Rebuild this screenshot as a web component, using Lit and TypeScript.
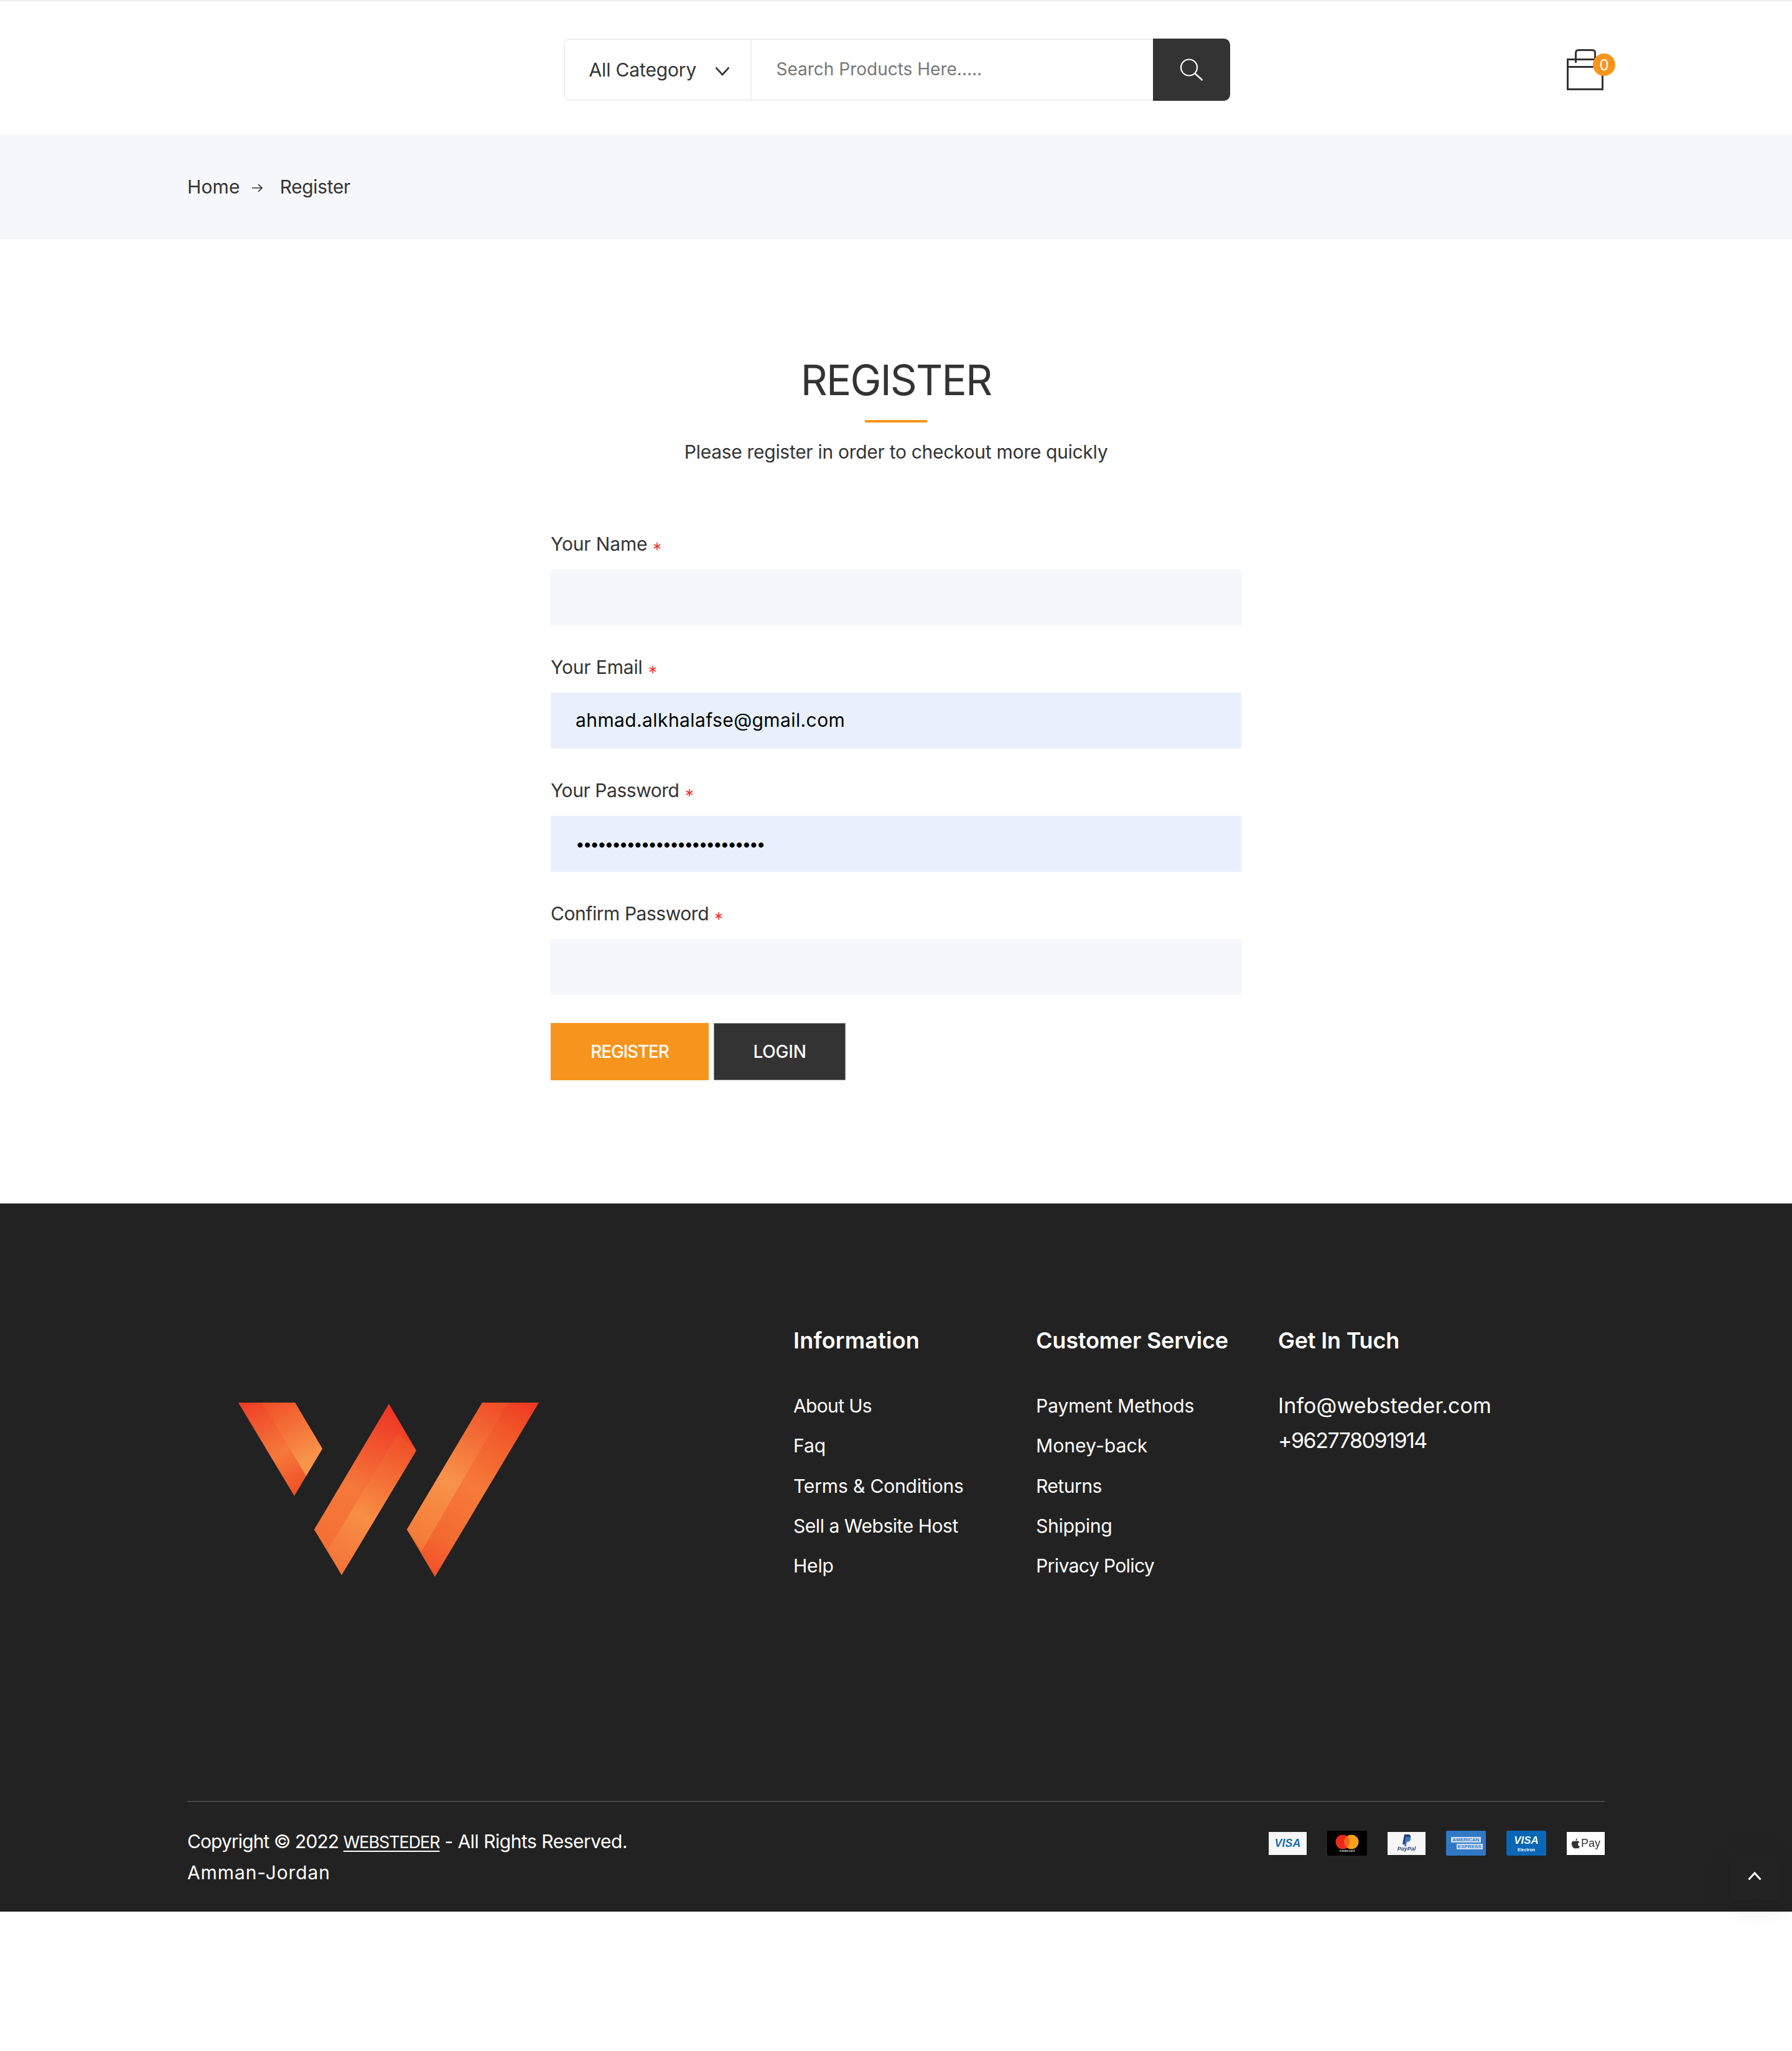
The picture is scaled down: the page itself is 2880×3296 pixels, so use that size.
import { LitElement, html, css, svg } from "lit";
import { customElement } from "lit/decorators.js";

const star = html`<svg class="star" viewBox="0 0 12 12" aria-hidden="true"><path d="M6 0V12M.8 3 11.2 9M11.2 3 .8 9" fill="none" stroke="#f5322a" stroke-width="1.700"/></svg>`;

const logo = svg`<defs>
  <linearGradient id="a1" gradientUnits="userSpaceOnUse" x1="383" y1="2254" x2="473" y2="2404"><stop offset="0" stop-color="#ee3b24"/><stop offset=".6" stop-color="#f5793a"/><stop offset="1" stop-color="#f04e27"/></linearGradient>
  <linearGradient id="a2" gradientUnits="userSpaceOnUse" x1="440" y1="2254" x2="492" y2="2345"><stop offset="0" stop-color="#f15329"/><stop offset="1" stop-color="#f8934a"/></linearGradient>
  <linearGradient id="b1" gradientUnits="userSpaceOnUse" x1="635" y1="2256" x2="520" y2="2480"><stop offset="0" stop-color="#ee3124"/><stop offset=".6" stop-color="#f5783a"/><stop offset="1" stop-color="#f47034"/></linearGradient>
  <linearGradient id="b2" gradientUnits="userSpaceOnUse" x1="650" y1="2310" x2="535" y2="2520"><stop offset="0" stop-color="#f04e27"/><stop offset=".6" stop-color="#f88e45"/><stop offset="1" stop-color="#f4733a"/></linearGradient>
  <linearGradient id="c1" gradientUnits="userSpaceOnUse" x1="790" y1="2254" x2="665" y2="2480"><stop offset="0" stop-color="#f14f28"/><stop offset=".55" stop-color="#f8934a"/><stop offset="1" stop-color="#f47a37"/></linearGradient>
  <linearGradient id="c2" gradientUnits="userSpaceOnUse" x1="850" y1="2254" x2="690" y2="2534"><stop offset="0" stop-color="#ee3a24"/><stop offset=".18" stop-color="#f15829"/><stop offset=".5" stop-color="#f67a3a"/><stop offset=".8" stop-color="#f26a30"/><stop offset="1" stop-color="#f14e28"/></linearGradient>
</defs>
<polygon points="383,2254 474,2254 518,2328 473,2404" fill="url(#a1)"/>
<polygon points="421,2254 474,2254 518,2328 492,2372" fill="url(#a2)"/>
<polygon points="625,2256 669,2331 549,2531 505,2458" fill="url(#b1)"/>
<polygon points="640,2304 669,2331 549,2531 527,2490" fill="url(#b2)"/>
<polygon points="775,2254 866,2254 699,2534 654,2458" fill="url(#c2)"/>
<polygon points="775,2254 816,2254 677.5,2493 654,2458" fill="url(#c1)"/>`;

const infoLinks = [
  { t: "About Us", s: -0.65 },
  { t: "Faq", s: 0 },
  { t: "Terms & Conditions", s: -0.15 },
  { t: "Sell a Website Host", s: -0.45 },
  { t: "Help", s: -0.2 },
];
const serviceLinks = [
  { t: "Payment Methods", s: -0.15 },
  { t: "Money-back", s: 0.1 },
  { t: "Returns", s: -0.5 },
  { t: "Shipping", s: -0.25 },
  { t: "Privacy Policy", s: -0.6 },
];
const links = (items: { t: string; s: number }[]) =>
  html`<ul>${items.map((l) => html`<li><a href="#" style="letter-spacing:${l.s}px">${l.t}</a></li>`)}</ul>`;

@customElement("app-root")
export class AppRoot extends LitElement {
  static styles = css`
    :host { display: block; font-family: Inter, "Liberation Sans", sans-serif; font-size: 30px; line-height: 40px; color: #333; background: #fff; }
    * { box-sizing: border-box; }
    a { color: inherit; text-decoration: none; }

    .header { display: grid; grid-template-columns: 1fr 1071px 1fr; align-items: center; height: 216px; border-top: 2px solid #eee; padding-top: 6px; }
    .search { grid-column: 2; display: flex; height: 100px; margin-left: 1.500px; width: 1071px; border: 2px solid #eee; border-right: 0; border-radius: 10px; }
    .cat { width: 299.500px; flex: none; display: flex; align-items: center; padding-left: 38.500px; border-right: 2px solid #eee; letter-spacing: -.15px; color: #333; }
    .cat svg { margin-left: 30px; margin-top: 4px; }
    .q { flex: 1; min-width: 0; border: 0; outline: 0; background: none; padding: 0 0 2px 40px; font: inherit; font-size: 28px; letter-spacing: 0; }
    .q::placeholder { color: #777; opacity: 1; }
    .go { width: 124px; margin: -2px 0; flex: none; border: 0; background: #333; border-radius: 0 10px 10px 0; display: flex; align-items: center; justify-content: center; padding: 0; }
    .cart { grid-column: 3; justify-self: end; margin-right: 284px; margin-top: 0; display: block; }
    .badge-num { font: 24px Inter, "Liberation Sans", sans-serif; fill: #fff; }

    .crumbs { height: 168px; background: #f6f7fb; display: flex; align-items: center; padding-left: 301px; letter-spacing: .15px; }
    .crumbs svg { margin: 4px 28px 0 19px; }
    .crumbs span { letter-spacing: -.35px; }

    .register { padding: 187px 0 198px; display: flex; flex-direction: column; align-items: center; }
    h1 { margin: 0; font-size: 67px; line-height: 80px; font-weight: 400; color: #333; letter-spacing: -1.8px; }
    .rule { width: 100px; height: 4px; background: #f7941d; margin-top: 24px; }
    .sub { margin: 27px 0 0; letter-spacing: -.29px; }
    form { width: 1110px; margin: 108px 0 0; display: flex; flex-direction: column; }
    .field { display: flex; flex-direction: column; margin-bottom: 47px; }
    .field label { display: flex; align-items: center; gap: 10px; height: 40px; margin-bottom: 21px; letter-spacing: -.15px; }
    .field label.tight { letter-spacing: -.45px; }
    .star { width: 12px; height: 12px; margin-top: 7px; }
    .field input { height: 90px; border: 0; outline: 0; padding: 0 40px 3px; background: #f6f7fb; font: inherit; color: #000; letter-spacing: .4px; }
    .field input.filled { background: #e8f0fe; }
    .field input[type="password"] { font-size: 26px; letter-spacing: -3px; padding: 0 40px; }
    .btns { display: flex; gap: 8px; margin-top: -2px; }
    .btn { height: 92px; border: 1px solid; display: flex; align-items: center; justify-content: center; font: inherit; font-size: 28px; font-weight: 500; color: #fff; padding: 0; }
    .btn.primary { width: 254px; background: #f7941d; border-color: #f7941d; letter-spacing: -1.2px; }
    .btn.dark { width: 212px; background: #333; border-color: #888; letter-spacing: -.2px; }

    footer { background: #222; color: #fff; height: 1138px; padding: 196px 301px 0; }
    .cols { display: grid; grid-template-columns: 974px 390px 389px 1fr; height: 764px; }
    .brand { padding: 124px 0 0 82px; }
    .brand svg { display: block; }
    h3 { margin: 0 0 61px; font-size: 36px; line-height: 48px; font-weight: 600; letter-spacing: -.2px; color: #fff; }
    h3.wide { letter-spacing: .2px; }
    ul { list-style: none; margin: 0; padding: 0; display: flex; flex-direction: column; gap: 24.25px; }
    .contact { font-size: 34px; line-height: 56px; margin-top: -8px; letter-spacing: .1px; }
    .contact div { height: 56px; }
    .contact .phone { letter-spacing: -1.5px; }
    .bottom { border-top: 2px solid #444; padding-top: 39px; display: flex; justify-content: space-between; align-items: flex-start; line-height: 48px; }
    .c1 { letter-spacing: -.9px; }
    .brandname { font-size: 27px; letter-spacing: -1.1px; text-decoration: underline; text-underline-offset: 4px; }
    .c2 { letter-spacing: -.5px; }
    .c3 { letter-spacing: .9px; }
    .pays { display: flex; gap: 33px; margin-top: 7px; align-items: center; }
    .pay { height: 37px; width: 61px; flex: none; display: flex; flex-direction: column; align-items: center; justify-content: center; background: #f6f6f6; font-family: "Liberation Sans", sans-serif; font-style: italic; font-weight: 700; line-height: 1; overflow: hidden; filter: blur(.5px); }
    .pay.tall { height: 40px; width: 64px; border-radius: 2px; }
    .visa { color: #1a6fb5; font-size: 18px; }
    .mc { background: #000; }
    .mc svg { display: block; }
    .mc span { font-size: 5px; font-style: normal; font-weight: 400; color: #fff; }
    .pp { color: #2a3f7e; font-size: 9px; }
    .pp svg { display: block; }
    .amex { background: #2f78c4; color: #fff; font-size: 8px; font-style: normal; line-height: 9px; }
    .amex span:last-child { background: #cfe0f2; color: #2f78c4; margin-left: 12px; padding: 0 2px; }
    .amex span:first-child { background: #cfe0f2; color: #2f78c4; padding: 0 2px; margin-bottom: 2px; }
    .electron { background: #0a67b6; color: #fff; font-size: 17px; }
    .electron small { font-size: 7px; font-style: normal; margin-top: 3px; }
    .apple { background: #fff; flex-direction: row; color: #333; font-style: normal; font-weight: 400; font-size: 18px; gap: 2px; }

    .top { position: fixed; right: 19px; bottom: 243px; width: 80px; height: 80px; border: 0; padding: 0 2px 0 0; background: #222; box-shadow: 0 10px 40px rgba(0,0,0,.1); display: flex; align-items: center; justify-content: center; }
    .top svg { margin-top: 4px; }
  `;

  render() {
    return html`
      <div class="header">
        <div class="search">
          <div class="cat">All Category
            <svg width="24" height="15" viewBox="0 0 24 15"><path d="M1.500 1.500 12 13 22.500 1.500" fill="none" stroke="#333" stroke-width="2.600"/></svg>
          </div>
          <input class="q" placeholder="Search Products Here....." />
          <button class="go" type="button" aria-label="Search">
            <svg width="38" height="36" viewBox="0 0 38 36"><circle cx="15" cy="14.500" r="13" fill="none" stroke="#fff" stroke-width="2.200"/><path d="M24.500 24 36.500 35" fill="none" stroke="#fff" stroke-width="2.400"/></svg>
          </button>
        </div>
        <svg class="cart" width="80" height="70" viewBox="0 0 80 70">
          <path d="M3.500 18.500H59.500V66.500H3.500ZM3.500 30.500H59.500" fill="none" stroke="#333" stroke-width="3"/>
          <path d="M16.500 24V8Q16.500 3.500 21 3.500H43Q47.500 3.500 47.500 8V18" fill="none" stroke="#333" stroke-width="3"/>
          <circle cx="62" cy="27" r="18" fill="#f7941d"/>
          <text class="badge-num" x="62" y="36" text-anchor="middle">0</text>
        </svg>
      </div>

      <nav class="crumbs">
        <a href="#">Home</a>
        <svg width="17" height="14" viewBox="0 0 17 14"><path d="M0 7H16M10 1 16 7 10 13" fill="none" stroke="#333" stroke-width="1.600"/></svg>
        <span>Register</span>
      </nav>

      <main class="register">
        <h1>REGISTER</h1>
        <div class="rule"></div>
        <p class="sub">Please register in order to checkout more quickly</p>
        <form>
          <div class="field"><label>Your Name ${star}</label><input type="text" /></div>
          <div class="field"><label>Your Email ${star}</label><input class="filled" type="email" value="ahmad.alkhalafse@gmail.com" /></div>
          <div class="field"><label class="tight">Your Password ${star}</label><input class="filled" type="password" value="aaaaaaaaaaaaaaaaaaaaaaaaaa" /></div>
          <div class="field"><label class="tight">Confirm Password ${star}</label><input type="password" /></div>
          <div class="btns">
            <button class="btn primary" type="button">REGISTER</button>
            <a class="btn dark" href="#">LOGIN</a>
          </div>
        </form>
      </main>

      <footer>
        <div class="cols">
          <div class="brand"><svg width="483" height="280" viewBox="383 2254 483 280">${logo}</svg></div>
          <div><h3 class="wide">Information</h3>${links(infoLinks)}</div>
          <div><h3>Customer Service</h3>${links(serviceLinks)}</div>
          <div><h3>Get In Tuch</h3><div class="contact"><div>Info@websteder.com</div><div class="phone">+962778091914</div></div></div>
        </div>
        <div class="bottom">
          <div><span class="c1">Copyright © 2022 </span><span class="brandname">WEBSTEDER</span><span class="c2"> - All Rights Reserved.</span><br /><span class="c3">Amman-Jordan</span></div>
          <div class="pays">
            <div class="pay visa">VISA</div>
            <div class="pay tall mc">
              <svg width="38" height="24" viewBox="0 0 38 24"><circle cx="12" cy="12" r="11.500" fill="#eb2a1e"/><circle cx="26" cy="12" r="11.500" fill="#f9a11b"/><path d="M19 3a11.500 11.500 0 0 1 0 18 11.500 11.500 0 0 1 0-18Z" fill="#f5651c"/></svg>
              <span>mastercard</span>
            </div>
            <div class="pay pp">
              <svg width="14" height="19" viewBox="0 0 14 19"><path d="M3 0H9Q14 0 13 5 12 10 7 10H5L4 16H0Z" fill="#253b80"/><path d="M5 4H10Q14 4 13 8 12 12 8 12H7L6 19H3Z" fill="#3b7bbf"/></svg>
              <span>PayPal</span>
            </div>
            <div class="pay tall amex"><span>AMERICAN</span><span>EXPRESS</span></div>
            <div class="pay tall electron">VISA<small>Electron</small></div>
            <div class="pay apple">
              <svg width="14" height="17" viewBox="0 0 14 17"><path d="M10 0Q10 3 7.500 4 7 1.500 10 0ZM7 5Q9 4 11 4.500 12.500 5 13 6.500 10.500 8 11 10.500 11.500 12.500 14 13 12.500 17 10.500 16.500 8.500 15.500 6.500 16.500 4.500 17 2.500 14 0 10 1 7 2.500 3.500 7 5Z" fill="#333"/></svg>
              <span>Pay</span>
            </div>
          </div>
        </div>
      </footer>

      <button class="top" type="button" aria-label="Back to top">
        <svg width="22" height="14" viewBox="0 0 22 14"><path d="M1.500 12.500 11 2 20.500 12.500" fill="none" stroke="#fff" stroke-width="3"/></svg>
      </button>
    `;
  }
}
